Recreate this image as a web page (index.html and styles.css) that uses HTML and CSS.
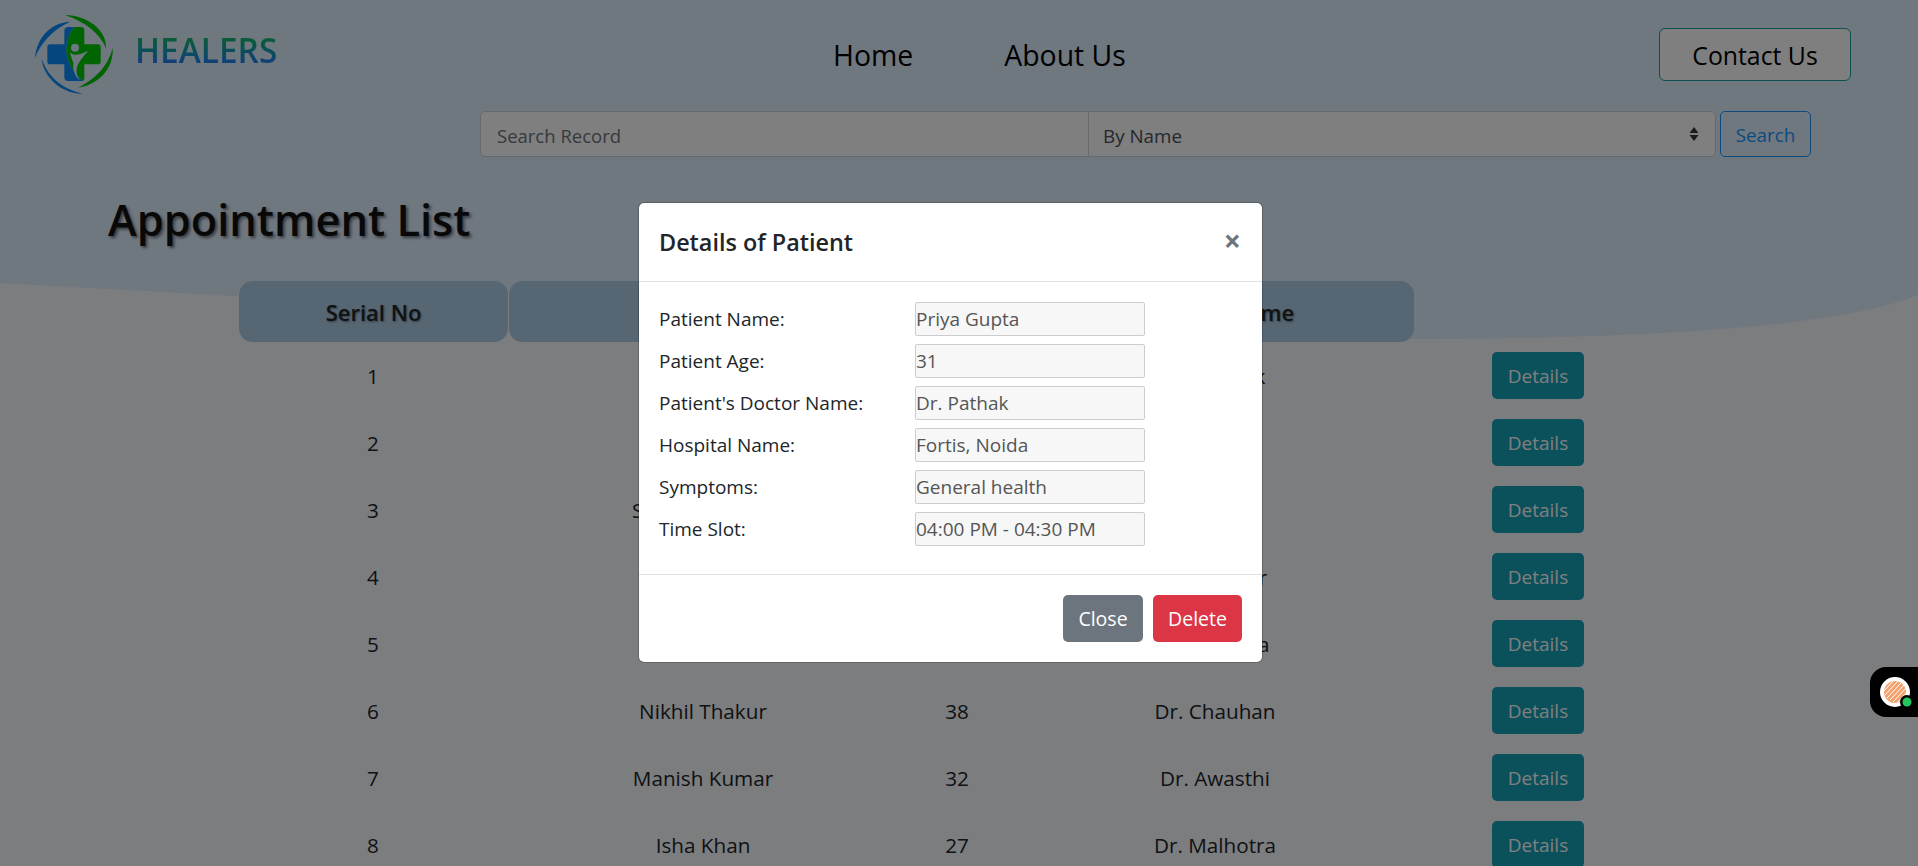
FILE: index.html
```html
<!DOCTYPE html>
<html lang="en">
<head>
  <meta charset="UTF-8" />
  <title>Healers - Appointment List</title>
  <link rel="stylesheet" href="styles.css">
</head>
<body>
  <div id="page">
    <svg class="bg-wave" viewBox="0 0 1918 866" width="1918" height="866"><path d="M0 0H1918V295C1700 384 600 316 0 283Z"/></svg>

    <div id="topbar">
      <a class="brand" href="#">
        <svg class="logo" viewBox="0 0 330 300" width="110" height="100">
          <path class="logo-blue" d="M150 50C95 52 50 95 45 160C58 120 95 75 150 50Z"/>
          <path class="logo-blue" d="M65 160C68 215 125 268 187 266C140 255 85 225 65 160Z"/>
          <path class="logo-green" d="M135 30C200 30 262 75 258 130C240 85 195 50 135 30Z"/>
          <path class="logo-green" d="M278 130C282 190 235 240 175 248C220 225 262 190 278 130Z"/>
          <path class="logo-blue" d="M145 66C137 66 133 70 133 78V118H90C85 118 82 121 82 126V170C82 175 85 178 90 178H133V217C133 224 137 228 145 228H190C160 205 135 160 140 125C143 100 150 80 165 66Z"/>
          <path class="logo-green" d="M165 66H183C190 66 193 70 193 76V118H234C239 118 242 121 242 126V170C242 175 239 178 234 178H193V220C193 225 191 228 185 228H190C160 205 135 160 140 125C143 100 150 80 165 66Z"/>
          <circle class="logo-light" cx="165" cy="128" r="12"/>
          <path class="logo-light" d="M150 140C160 155 175 150 205 137C190 155 175 170 170 190C168 205 172 215 180 226C165 215 158 195 160 175C158 165 152 155 150 140Z"/>
        </svg>
        <span class="brand-name">HEALERS</span>
      </a>
      <nav class="nav">
        <a href="#">Home</a>
        <a href="#">About Us</a>
      </nav>
      <button class="contact-btn">Contact Us</button>
    </div>

    <form class="search-form">
      <input class="search-input" type="text" placeholder="Search Record">
      <select class="search-select">
        <option>By Name</option>
      </select>
      <button class="search-btn" type="button">Search</button>
    </form>

    <h1 class="page-title">Appointment List</h1>

    <table class="list">
      <thead>
        <tr>
          <th class="col-serial">Serial No</th>
          <th class="col-name">Name</th>
          <th class="col-age">Age</th>
          <th class="col-doctor">Doctor's Name</th>
          <th class="col-action blank"></th>
        </tr>
      </thead>
      <tbody>
        <tr><td>1</td><td>Priya Gupta</td><td>31</td><td>Dr. Pathak</td><td><button class="details-btn">Details</button></td></tr>
        <tr><td>2</td><td>Rahul Verma</td><td>45</td><td>Dr. Singh</td><td><button class="details-btn">Details</button></td></tr>
        <tr><td>3</td><td>Sneha Agarwal</td><td>29</td><td>Dr. Mehta</td><td><button class="details-btn">Details</button></td></tr>
        <tr><td>4</td><td>Amit Yadav</td><td>52</td><td>Dr. Kapoor</td><td><button class="details-btn">Details</button></td></tr>
        <tr><td>5</td><td>Neha Joshi</td><td>24</td><td>Dr. Sharma</td><td><button class="details-btn">Details</button></td></tr>
        <tr><td>6</td><td>Nikhil Thakur</td><td>38</td><td>Dr. Chauhan</td><td><button class="details-btn">Details</button></td></tr>
        <tr><td>7</td><td>Manish Kumar</td><td>32</td><td>Dr. Awasthi</td><td><button class="details-btn">Details</button></td></tr>
        <tr><td>8</td><td>Isha Khan</td><td>27</td><td>Dr. Malhotra</td><td><button class="details-btn">Details</button></td></tr>
      </tbody>
    </table>

    <div class="backdrop">
      <div class="modal">
        <div class="modal-header">
          <h5>Details of Patient</h5>
          <span class="modal-x">&times;</span>
        </div>
        <div class="modal-body">
          <div class="field"><label>Patient Name:</label><input type="text" value="Priya Gupta" readonly></div>
          <div class="field"><label>Patient Age:</label><input type="text" value="31" readonly></div>
          <div class="field"><label>Patient's Doctor Name:</label><input type="text" value="Dr. Pathak" readonly></div>
          <div class="field"><label>Hospital Name:</label><input type="text" value="Fortis, Noida" readonly></div>
          <div class="field"><label>Symptoms:</label><input type="text" value="General health" readonly></div>
          <div class="field"><label>Time Slot:</label><input type="text" value="04:00 PM - 04:30 PM" readonly></div>
        </div>
        <div class="modal-footer">
          <button class="btn-close">Close</button>
          <button class="btn-delete">Delete</button>
        </div>
      </div>
    </div>

    <div class="widget">
      <svg viewBox="0 0 48 50" width="48" height="50">
        <circle cx="25" cy="25" r="15" fill="#fff"/>
        <circle cx="25" cy="25" r="11" fill="#f3a26f"/>
        <path d="M14 24L24 13M15 28L28 14M17 31L31 16M20 33L34 18M23 35L36 21M27 36L37 25" stroke="#fff" stroke-width="1"/>
        <circle cx="37" cy="35" r="7" fill="#000"/>
        <circle cx="37" cy="35" r="4.5" fill="#22c55e"/>
      </svg>
    </div>
  </div>
</body>
</html>
```

FILE: styles.css
```css
* {
  box-sizing: border-box;
}
html, body {
  margin: 0;
  padding: 0;
}
body {
  font-family: 'Open Sans', 'Noto Sans', sans-serif;
  font-size: 19px;
  color: #212529;
  background: #f8fafe;
  overflow: hidden;
}
a {
  color: inherit;
  text-decoration: none;
}
button, input, select {
  font-family: inherit;
}
#page {
  position: relative;
  width: 1918px;
  height: 866px;
  overflow: hidden;
}
.bg-wave {
  position: absolute;
  top: 0;
  left: 0;
  fill: #dfeeff;
}

/* top bar */
#topbar {
  position: relative;
  display: flex;
  align-items: flex-start;
  height: 111px;
  padding-right: 67px;
}
.brand {
  display: flex;
  align-items: flex-start;
  width: 833px;
  padding: 5px 0 0 20px;
}
.brand-name {
  margin: 25px 0 0 5px;
  font-size: 33.4px;
  line-height: 40px;
  font-weight: 600;
  background: linear-gradient(180deg, #10c060 15%, #1e80f0 80%);
  -webkit-background-clip: text;
  background-clip: text;
  color: transparent;
}
.nav {
  display: flex;
  gap: 91px;
  padding-top: 35px;
  font-size: 28.4px;
  line-height: 40px;
  color: #000;
}
.contact-btn {
  margin: 28px 0 0 auto;
  width: 192px;
  height: 53px;
  background: #fff;
  border: 1px solid #17a2a2;
  border-radius: 6px;
  font-size: 24.8px;
  color: #000;
}

/* search */
.search-form {
  position: relative;
  display: flex;
  height: 46px;
  width: 1340px;
  margin-left: 480px;
}
.search-input {
  width: 609px;
  height: 46px;
  padding: 2px 16px 0;
  border: 1px solid #ced4da;
  border-radius: 5px 0 0 5px;
  font-size: 18.5px;
  background: #fff;
}
.search-input::placeholder {
  color: #6c757d;
}
.search-select {
  width: 628px;
  height: 46px;
  margin-left: -1px;
  padding: 3px 14px 0;
  border: 1px solid #ced4da;
  border-radius: 0 5px 5px 0;
  font-size: 18.8px;
  color: #495057;
  appearance: none;
  background: #fff url("data:image/svg+xml,%3Csvg xmlns='http://www.w3.org/2000/svg' width='10' height='16'%3E%3Cpath d='M5 1L9.5 7H.5zM5 15L.5 9H9.5z' fill='%23343a40'/%3E%3C/svg%3E") no-repeat right 16px center;
}
.search-btn {
  width: 91px;
  height: 46px;
  margin-left: 4px;
  padding-top: 3px;
  background: transparent;
  border: 1px solid #1a96ff;
  border-radius: 5px;
  font-size: 18.8px;
  color: #1a96ff;
}

.page-title {
  position: relative;
  margin: 34px 0 32px 108px;
  font-size: 43.4px;
  line-height: 58px;
  font-weight: 600;
  color: #111;
  text-shadow: 2px 2px 3px rgba(0, 0, 0, 0.5);
}

/* table */
.list {
  position: relative;
  margin-left: 238px;
  width: 1424px;
  border-collapse: separate;
  border-spacing: 0;
  table-layout: fixed;
  text-align: center;
  font-size: 20.7px;
}
.list th {
  height: 61px;
  padding-top: 2px;
  background: #accce6;
  border-radius: 14px;
  font-size: 22px;
  font-weight: 600;
  text-shadow: 1px 1px 2px rgba(0, 0, 0, 0.4);
  border-left: 1px solid #f8fafe;
}
.list th.blank {
  background: none;
  border: 0;
}
.col-serial { width: 270px; }
.col-name { width: 390px; }
.col-age { width: 118px; }
.col-doctor { width: 398px; }
.col-action { width: 248px; }
.list td {
  height: 67px;
  padding: 0;
}
.details-btn {
  display: block;
  width: 92px;
  height: 47px;
  margin: 0 auto;
  background: #17a2b8;
  border: 0;
  border-radius: 5px;
  font-size: 19px;
  color: #fff;
}

/* modal */
.backdrop {
  position: absolute;
  inset: 0;
  display: flex;
  justify-content: center;
  align-items: flex-start;
  padding: 202px 17px 0 0;
  background: rgba(0, 0, 0, 0.5);
}
.modal {
  width: 625px;
  background: #fff;
  border: 1px solid rgba(0, 0, 0, 0.2);
  border-radius: 6px;
  background-clip: padding-box;
}
.modal-header {
  display: flex;
  justify-content: space-between;
  align-items: center;
  height: 79px;
  padding: 0 21px 0 20px;
  border-bottom: 1px solid #dee2e6;
}
.modal-header h5 {
  margin: 0;
  font-size: 23.4px;
  font-weight: 600;
}
.modal-x {
  margin-top: -4px;
  font-size: 30px;
  font-weight: 700;
  color: #6c757d;
}
.modal-body {
  display: flex;
  flex-direction: column;
  gap: 8px;
  padding: 20px 20px 28px;
}
.field {
  display: flex;
  align-items: center;
  height: 34px;
}
.field label {
  width: 256px;
}
.field input {
  width: 230px;
  height: 34px;
  padding: 0;
  background: #f7f7f7;
  border: 1px solid #ccc;
  border-radius: 2px;
  font-size: 19px;
  color: #555;
  outline: none;
}
.modal-footer {
  display: flex;
  justify-content: flex-end;
  gap: 10px;
  height: 88px;
  padding: 20px 20px 0 0;
  border-top: 1px solid #dee2e6;
}
.modal-footer button {
  height: 47px;
  border: 0;
  border-radius: 5px;
  font-size: 19.5px;
  color: #fff;
}
.btn-close {
  width: 80px;
  background: #6c757d;
}
.btn-delete {
  width: 89px;
  background: #dc3545;
}

/* chat widget */
.widget {
  position: absolute;
  top: 667px;
  right: 0;
  width: 48px;
  height: 50px;
  background: #000;
  border-radius: 16px 0 0 16px;
}
.widget svg {
  display: block;
}

/* logo colours */
.logo-blue { fill: #0a8cff; }
.logo-green { fill: #00c800; }
.logo-light { fill: #dfeeff; }
```
